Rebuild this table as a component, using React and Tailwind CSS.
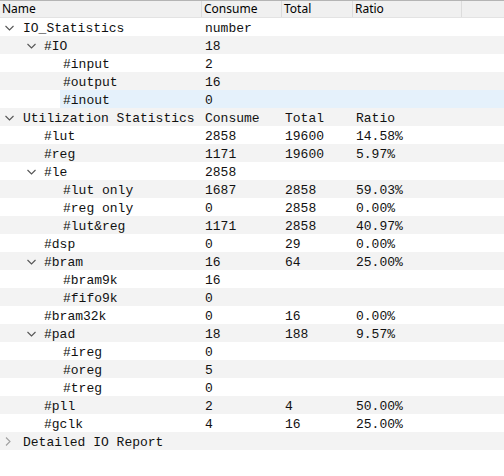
import React from "react";

const rows = [
  { name: "IO_Statistics", level: 0, chev: "open", c: "number" },
  { name: "#IO", level: 1, chev: "open", c: "18" },
  { name: "#input", level: 2, c: "2" },
  { name: "#output", level: 2, c: "16" },
  { name: "#inout", level: 2, c: "0", selected: true },
  { name: "Utilization Statistics", level: 0, chev: "open", c: "Consume", t: "Total", r: "Ratio" },
  { name: "#lut", level: 1, c: "2858", t: "19600", r: "14.58%" },
  { name: "#reg", level: 1, c: "1171", t: "19600", r: "5.97%" },
  { name: "#le", level: 1, chev: "open", c: "2858" },
  { name: "#lut only", level: 2, c: "1687", t: "2858", r: "59.03%" },
  { name: "#reg only", level: 2, c: "0", t: "2858", r: "0.00%" },
  { name: "#lut&reg", level: 2, c: "1171", t: "2858", r: "40.97%" },
  { name: "#dsp", level: 1, c: "0", t: "29", r: "0.00%" },
  { name: "#bram", level: 1, chev: "open", c: "16", t: "64", r: "25.00%" },
  { name: "#bram9k", level: 2, c: "16" },
  { name: "#fifo9k", level: 2, c: "0" },
  { name: "#bram32k", level: 1, c: "0", t: "16", r: "0.00%" },
  { name: "#pad", level: 1, chev: "open", c: "18", t: "188", r: "9.57%" },
  { name: "#ireg", level: 2, c: "0" },
  { name: "#oreg", level: 2, c: "5" },
  { name: "#treg", level: 2, c: "0" },
  { name: "#pll", level: 1, c: "2", t: "4", r: "50.00%" },
  { name: "#gclk", level: 1, c: "4", t: "16", r: "25.00%" },
  { name: "Detailed IO Report", level: 0, chev: "closed" },
];

const textPad = ["pl-[23px]", "pl-[44px]", "pl-[63px]"];
const chevPad = ["pl-[5px]", "pl-[27px]", "pl-[46px]"];

function Chevron({ open }) {
  if (open) {
    return (
      <svg width="9" height="6" viewBox="0 0 9 6" className="block">
        <path d="M0.5 1 L4.5 5 L8.5 1" fill="none" stroke="#555" strokeWidth="1.1" />
      </svg>
    );
  }
  return (
    <svg width="6" height="9" viewBox="0 0 6 9" className="block">
      <path d="M1 0.5 L5 4.5 L1 8.5" fill="none" stroke="#a0a0a0" strokeWidth="1.1" />
    </svg>
  );
}

function HeaderCell({ children, className = "" }) {
  return (
    <div className={`h-full flex items-center pl-[2px] border-r border-[#dcdcdc] ${className}`}>
      {children}
    </div>
  );
}

export default function App() {
  return (
    <div className="w-[504px] h-[476px] bg-white overflow-hidden text-black">
      {/* Header */}
      <div
        className="h-[18px] flex bg-[#f0f0f0] border-t border-[#b4b4b4] border-b border-b-[#e3e3e3] text-[12px] leading-none"
        style={{ fontFamily: '"Noto Sans", "Open Sans", sans-serif' }}
      >
        <HeaderCell className="w-[202px]">Name</HeaderCell>
        <HeaderCell className="w-[80px]">Consume</HeaderCell>
        <HeaderCell className="w-[71px]">Total</HeaderCell>
        <HeaderCell className="w-[109px]">Ratio</HeaderCell>
        <div className="flex-1" />
      </div>

      {/* Rows */}
      <div
        className="text-[13px] leading-[18px] text-[#111]"
        style={{ fontFamily: '"Liberation Mono", "Courier New", monospace' }}
      >
        {rows.map((row, i) => (
          <div
            key={i}
            className={`relative h-[18px] flex ${i % 2 === 1 ? "bg-[#f3f3f3]" : "bg-white"}`}
          >
            {row.selected && (
              <div className="absolute top-0 bottom-0 left-[60px] right-0 bg-[#e5f1fb]" />
            )}
            <div className="relative w-[202px] h-full whitespace-nowrap">
              {row.chev && (
                <div className={`absolute left-0 top-0 h-full flex items-center pt-[1px] ${chevPad[row.level]}`}>
                  <Chevron open={row.chev === "open"} />
                </div>
              )}
              <div className={`pt-[2px] ${textPad[row.level]}`}>{row.name}</div>
            </div>
            <div className="relative w-[80px] pl-[3px] pt-[2px] whitespace-nowrap">{row.c}</div>
            <div className="relative w-[71px] pl-[3px] pt-[2px] whitespace-nowrap">{row.t}</div>
            <div className="relative w-[109px] pl-[3px] pt-[2px] whitespace-nowrap">{row.r}</div>
          </div>
        ))}
      </div>
    </div>
  );
}
